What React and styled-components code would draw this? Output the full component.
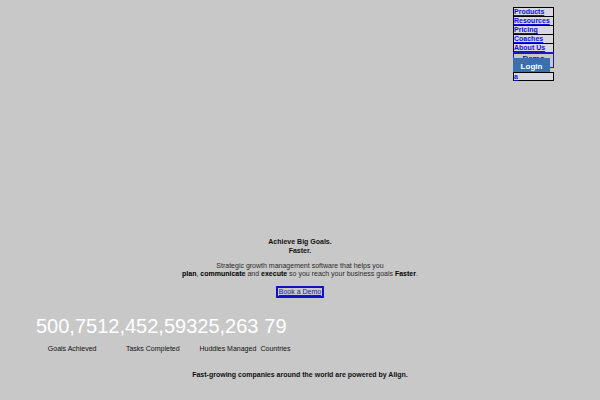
import React from "react";
import styled, { createGlobalStyle } from "styled-components";

const Global = createGlobalStyle`
  html, body { margin: 0; padding: 0; background: #c8c8c8; }
  body { font-family: "Liberation Sans", Arial, sans-serif; color: #111; }
  * { box-sizing: border-box; }
`;

const Page = styled.div`
  width: 600px;
  height: 400px;
  overflow: hidden;
  display: flex;
  flex-direction: column;
`;

const Header = styled.header`
  display: flex;
  justify-content: flex-end;
  padding: 7px 46px 0 0;
`;

const NavList = styled.ul`
  list-style: none;
  margin: 0;
  padding: 0;
  width: 41px;
  display: flex;
  flex-direction: column;
`;

const NavItem = styled.li`
  border: 1px solid #000;
  border-bottom-width: 0;
  background: #d8d8de;
  height: 9px;
  line-height: 7px;
  font-size: 7px;
  font-weight: 700;
  &:last-child { border-bottom-width: 1px; }
`;

const NavLink = styled.a`
  color: #1010e0;
  text-decoration: underline;
`;

const DemoButton = styled.li`
  height: 16px;
  border: 1px solid #1818c8;
  border-top-width: 2px;
  background: #c8c8c8;
  text-align: center;
  font-size: 8px;
  font-weight: 700;
  color: #141480;
  line-height: 9px;
`;

const LoginButton = styled.li`
  position: relative;
  margin-top: -10px;
  width: 37px;
  height: 16px;
  background: #3a6fb0;
  color: #fff;
  font-size: 8px;
  font-weight: 700;
  display: flex;
  align-items: center;
  justify-content: center;
`;

const LastItem = styled(NavItem)`
  margin-top: -2px;
  border-width: 1px;
  height: 9px;
  position: relative;
`;

const Hero = styled.section`
  margin-top: 156px;
  display: flex;
  flex-direction: column;
  align-items: center;
  text-align: center;
`;

const Title = styled.h1`
  margin: 0;
  font-size: 7px;
  line-height: 9px;
  font-weight: 700;
`;

const Lead = styled.p`
  margin: 7px 0 0;
  font-size: 7px;
  line-height: 8px;
  color: #2a2a2a;
  b { color: #000; }
`;

const BookButton = styled.a`
  margin-top: 8px;
  border: 2px solid #1010c8;
  padding: 0 1px;
  font-size: 7px;
  line-height: 8px;
  color: #1a1a90;
  background: #c8c8d2;
`;

const Stats = styled.div`
  margin-top: 17px;
  padding-left: 36px;
  display: flex;
  align-items: flex-start;
`;

const Stat = styled.div`
  display: flex;
  flex-direction: column;
  align-items: center;
  margin-left: ${(p) => p.$offset || 0}px;
`;

const Number = styled.div`
  font-size: 20px;
  line-height: 22px;
  color: #fff;
`;

const Label = styled.div`
  margin-top: 8px;
  font-size: 7px;
  line-height: 8px;
  color: #111;
  white-space: nowrap;
`;

const Footer = styled.p`
  margin: 18px 0 0;
  text-align: center;
  font-size: 7px;
  line-height: 8px;
  font-weight: 700;
`;

const navLinks = ["Products", "Resources", "Pricing", "Coaches", "About Us"];

const stats = [
  { n: "500,751", l: "Goals Achieved" },
  { n: "2,452,593", l: "Tasks Completed" },
  { n: "25,263", l: "Huddles Managed" },
  { n: "79", l: "Countries", offset: 2 },
];

export default function App() {
  return (
    <Page>
      <Global />
      <Header>
        <NavList>
          {navLinks.map((t) => (
            <NavItem key={t}>
              <NavLink href="#">{t}</NavLink>
            </NavItem>
          ))}
          <DemoButton>Demo</DemoButton>
          <LoginButton>Login</LoginButton>
          <LastItem>
            <NavLink href="#">a</NavLink>
          </LastItem>
        </NavList>
      </Header>
      <Hero>
        <Title>
          Achieve Big Goals.
          <br />
          Faster.
        </Title>
        <Lead>
          Strategic growth management software that helps you
          <br />
          <b>plan</b>, <b>communicate</b> and <b>execute</b> so you reach your business goals <b>Faster</b>.
        </Lead>
        <BookButton href="#">Book a Demo</BookButton>
      </Hero>
      <Stats>
        {stats.map((s) => (
          <Stat key={s.l} $offset={s.offset}>
            <Number>{s.n}</Number>
            <Label>{s.l}</Label>
          </Stat>
        ))}
      </Stats>
      <Footer>Fast-growing companies around the world are powered by Align.</Footer>
    </Page>
  );
}
